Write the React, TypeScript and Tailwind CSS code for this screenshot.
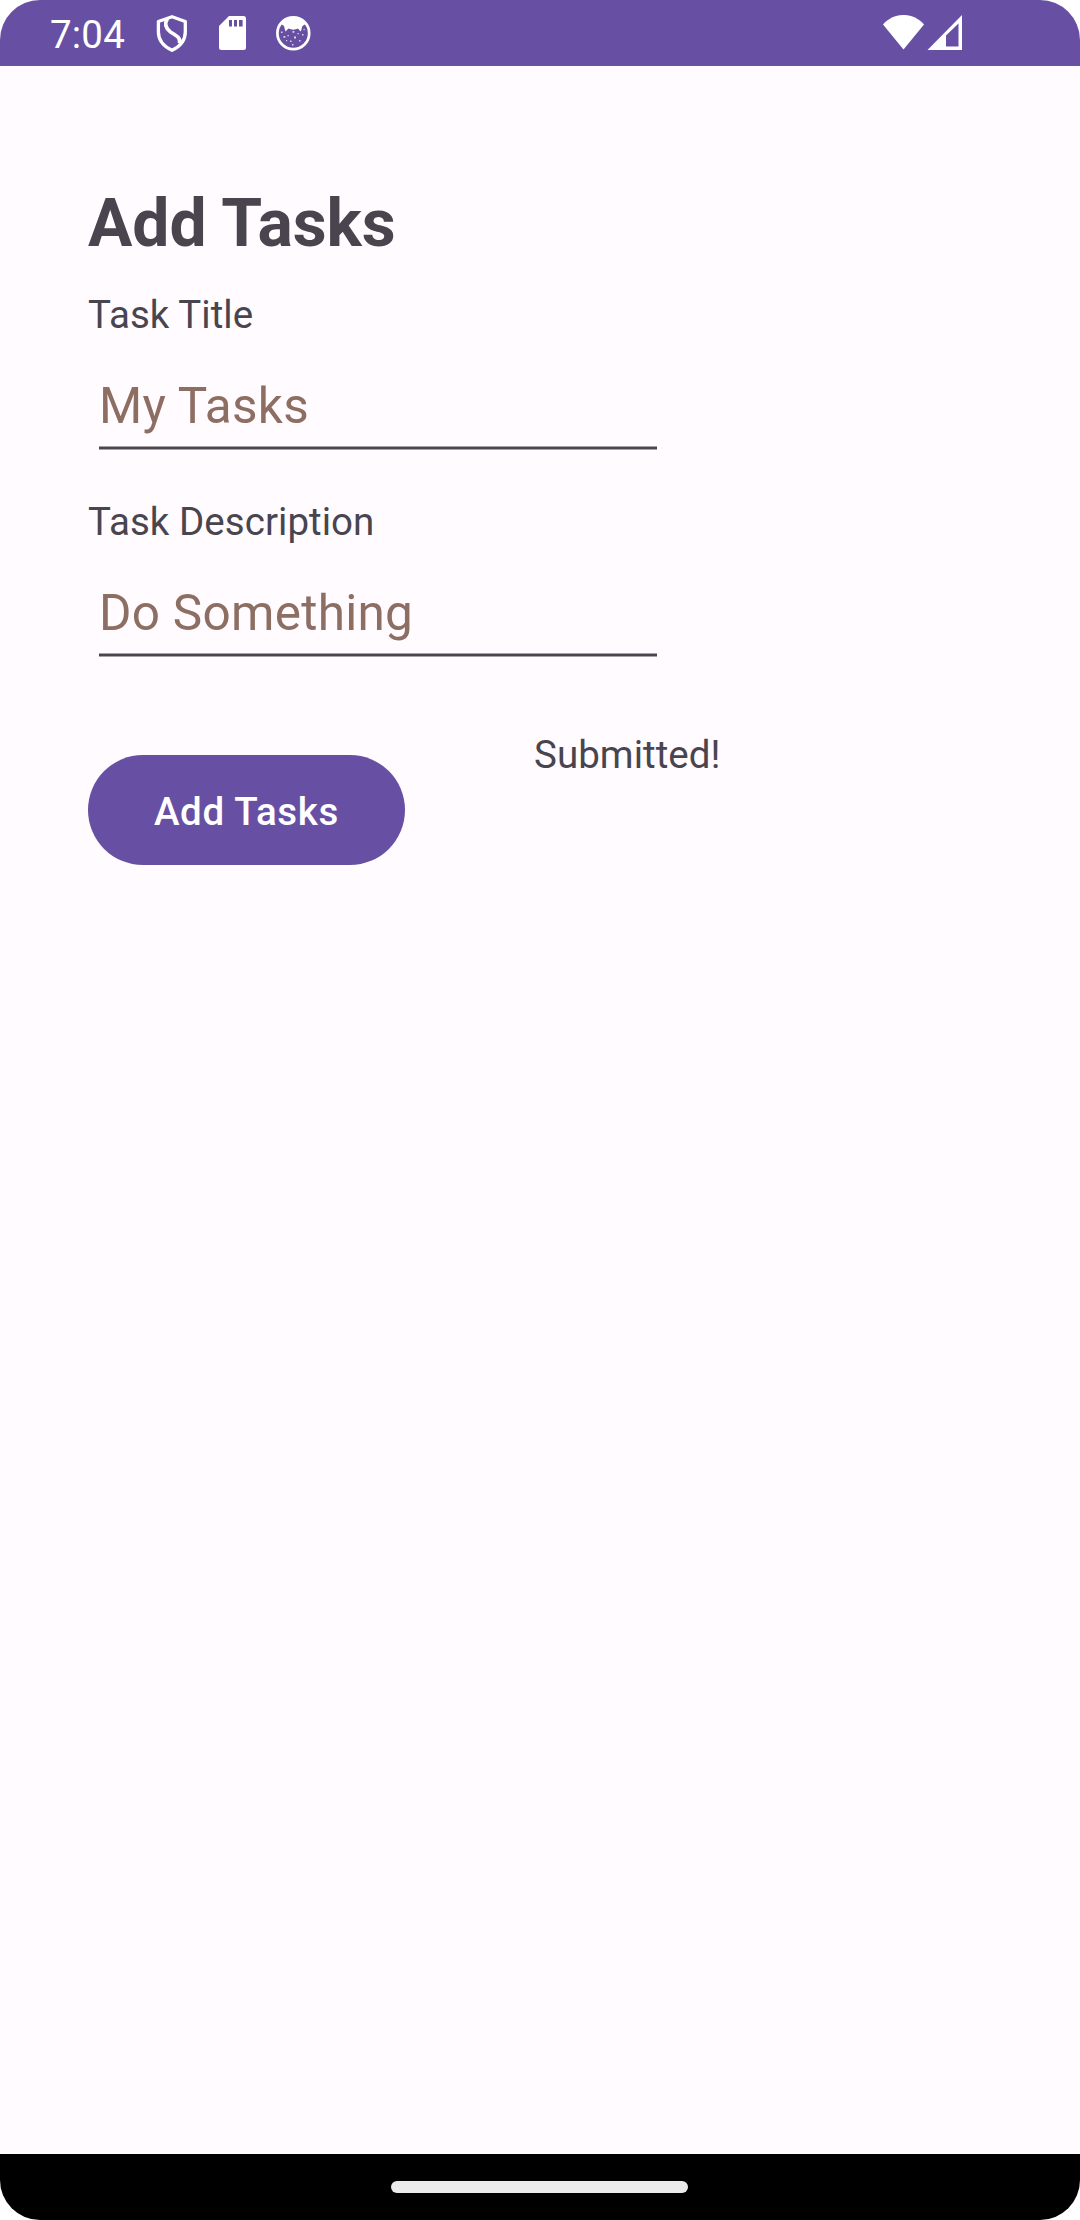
import React from "react";

function ShieldIcon() {
  return (
    <svg className="h-[40px] w-[34px]" viewBox="0 0 34 40" fill="none" stroke="white" strokeWidth="3.3" strokeLinejoin="round">
      <path d="M17 3.700 L30.300 8.500 V19 C30.300 27 25 33.500 17 37.300 C9 33.500 3.400 27 3.400 19 V8.500 Z" />
      <path strokeWidth="3.6" d="M12.500 5.800 C9 11 11 15.500 15.500 19 C21.500 22.500 26 25 24.500 30.500" />
    </svg>
  );
}

function SdCardIcon() {
  return (
    <svg className="h-[34px] w-[27px]" viewBox="0 0 27 34">
      <path fill="white" d="M10 0 H24.500 A2.500 2.500 0 0 1 27 2.500 V31.500 A2.500 2.500 0 0 1 24.500 34 H2.500 A2.500 2.500 0 0 1 0 31.500 V10 Z" />
      <path fill="#6750a4" d="M10 4h3v6.500h-3zM15 4h3v6.500h-3zM20 4h3.600v6.500H20z" />
    </svg>
  );
}

function AnimalIcon() {
  return (
    <svg className="h-[36px] w-[36px]" viewBox="0 0 36 36">
      <circle cx="18.300" cy="18.300" r="15.900" fill="none" stroke="white" strokeWidth="2.700" />
      <path fill="white" d="M6 9 C12 0 24 0 30.500 9 L27.500 11 C26.500 13 26.500 15.500 25.500 16.500 L23 13.500 C20 15 16.500 15 13.500 13.500 L10.500 16.500 C10 15 9.500 13 9 11 Z" />
      <g fill="white" opacity="0.75">
        <rect x="17.500" y="16" width="1.800" height="1.800" />
        <rect x="8.500" y="21" width="1.800" height="1.800" />
        <rect x="19" y="21.500" width="2" height="2" />
        <rect x="15" y="25.500" width="1.500" height="1.500" />
        <rect x="24" y="25" width="1.500" height="1.500" />
        <rect x="27" y="19" width="1.500" height="1.500" />
        <rect x="6" y="16.500" width="1.500" height="1.500" />
        <rect x="22.500" y="18" width="1.300" height="1.300" />
        <rect x="12.500" y="20" width="1.300" height="1.300" />
        <rect x="11" y="25" width="1.200" height="1.200" />
        <rect x="17" y="29" width="1.500" height="1.500" />
        <rect x="28.500" y="14" width="1.200" height="1.200" />
      </g>
    </svg>
  );
}

function StatusBar() {
  return (
    <header className="flex h-[66px] items-start bg-[#6750a4] text-white">
      <span className="ml-[50px] w-[105px] pt-[12px] text-[38.5px] leading-[46px] tracking-[0.2px]">7:04</span>
      <div className="mt-[13px]"><ShieldIcon /></div>
      <div className="mt-[16px] ml-[30px]"><SdCardIcon /></div>
      <div className="mt-[15px] ml-[29px]"><AnimalIcon /></div>
      <svg className="mt-[15px] ml-auto h-[35px] w-[41px]" viewBox="0 0 41 35">
        <path fill="white" d="M0 9.500 C11 -3.200 30 -3.200 41 9.500 L20.500 34.500 Z" />
      </svg>
      <svg className="mt-[15px] mr-[118px] ml-[3px] h-[35px] w-[35px]" viewBox="0 0 35 35">
        <path fill="white" fillRule="evenodd" d="M0.500 35 L35 0 V35 Z M19 20.500 L31.500 8.500 V31.500 H19 Z" />
      </svg>
    </header>
  );
}

function Field({ label, value }: { label: string; value: string }) {
  return (
    <div className="flex flex-col">
      <label className="h-[44px] text-[38.5px] leading-[44px] tracking-[0.05px]">{label}</label>
      <div className="mt-[39px] ml-[11px] flex w-[558px] flex-col">
        <span className="h-[60px] text-[49.5px] leading-[60px] tracking-[0.27px] text-[#8d6e63]">{value}</span>
        <div className="mt-[10px] h-[4px] border-y border-[#a5a2a8] bg-[#49454f]" />
      </div>
    </div>
  );
}

export default function App() {
  return (
    <div className="h-[2220px] w-[1080px] bg-white">
      <div className="flex h-full w-full flex-col overflow-hidden rounded-[40px] bg-[#fffbfe] font-[Roboto,sans-serif] text-[#49454f]">
        <StatusBar />
        <main className="flex flex-1 flex-col pt-[114px] pl-[88px]">
          <h1 className="mb-[26px] h-[87px] text-[66px] leading-[87px] font-bold">Add Tasks</h1>
          <div className="flex flex-col gap-[50px]">
            <Field label="Task Title" value="My Tasks" />
            <Field label="Task Description" value="Do Something" />
          </div>
          <div className="mt-[76px] flex items-start">
            <button className="mt-[22px] h-[110px] w-[317px] rounded-full bg-[#6750a4] pt-[4px] text-[38.5px] leading-[44px] font-medium tracking-[0.0178em] text-white">
              Add Tasks
            </button>
            <p className="ml-[129px] text-[38.5px] leading-[44px] tracking-[0.05px]">Submitted!</p>
          </div>
        </main>
        <footer className="flex h-[66px] justify-center bg-black pt-[27px] pr-[1px]">
          <div className="h-[12px] w-[297px] rounded-full bg-[#ebebeb]" />
        </footer>
      </div>
    </div>
  );
}
